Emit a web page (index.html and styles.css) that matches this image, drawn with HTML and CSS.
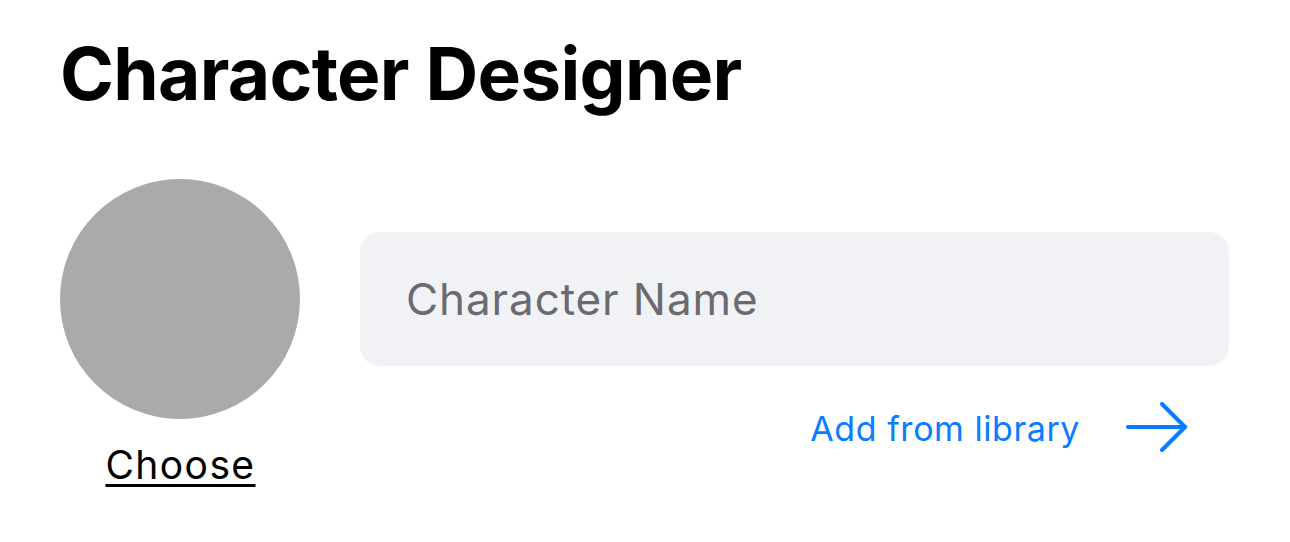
FILE: index.html
```html
<!DOCTYPE html>
<html lang="en">
<head>
<meta charset="utf-8">
<title>Character Designer</title>
<link rel="stylesheet" href="styles.css">
</head>
<body>
<main class="page">
  <h1 class="title">Character Designer</h1>
  <section class="editor">
    <div class="avatar-col">
      <div class="avatar"></div>
      <a class="choose" href="#">Choose</a>
    </div>
    <div class="name-col">
      <div class="name-field"><input class="name-input" type="text" placeholder="Character Name"></div>
      <a class="library" href="#">
        <span class="library-text">Add from library</span>
        <svg class="arrow" width="64" height="52" viewBox="0 0 64 52" fill="none" stroke="#0a7cff" stroke-width="4.2" stroke-linecap="round" stroke-linejoin="round">
          <path d="M3 26 H60"/>
          <path d="M37 3 L60 26 L37 49"/>
        </svg>
      </a>
    </div>
  </section>
</main>
</body>
</html>
```
FILE: styles.css
```css
html, body {
  margin: 0;
  padding: 0;
  background: #ffffff;
}
body {
  font-family: Inter, "Noto Sans", sans-serif;
  color: #000;
}
.page {
  padding: 0 61px 0 60px;
}
.title {
  margin: 0;
  padding-top: 30px;
  font-size: 73px;
  font-weight: 700;
  line-height: 88px;
  letter-spacing: -0.7px;
}
.editor {
  display: flex;
  align-items: flex-start;
  gap: 60px;
  margin-top: 61px;
}
.avatar-col {
  display: flex;
  flex-direction: column;
  align-items: center;
  width: 240px;
  flex: none;
}
.avatar {
  width: 240px;
  height: 240px;
  border-radius: 50%;
  background: #aaaaaa;
}
.choose {
  margin-top: 23px;
  padding-left: 1px;
  font-size: 39px;
  line-height: 46px;
  letter-spacing: 1.4px;
  color: #000;
  text-decoration: underline;
  text-decoration-thickness: 3px;
  text-underline-offset: 5px;
}
.name-col {
  flex: 1;
  display: flex;
  flex-direction: column;
  align-items: stretch;
  margin-top: 53px;
}
.name-field {
  height: 134px;
  border-radius: 20px;
  background: #f1f2f6;
  display: flex;
  align-items: center;
  padding: 0 46px;
}
.name-input {
  width: 100%;
  border: 0;
  outline: 0;
  background: transparent;
  font-family: inherit;
  font-size: 44px;
  letter-spacing: 0.9px;
  color: #000;
  padding: 0;
}
.name-input::placeholder {
  color: #6a6a70;
  opacity: 1;
}
.library {
  align-self: flex-end;
  display: flex;
  align-items: center;
  gap: 45px;
  margin-top: 35px;
  margin-right: 40px;
  color: #0a7cff;
  text-decoration: none;
}
.library-text {
  font-size: 34px;
  line-height: 44px;
  letter-spacing: 0.55px;
}
.arrow {
  display: block;
  flex: none;
  margin-bottom: 4px;
}
```
